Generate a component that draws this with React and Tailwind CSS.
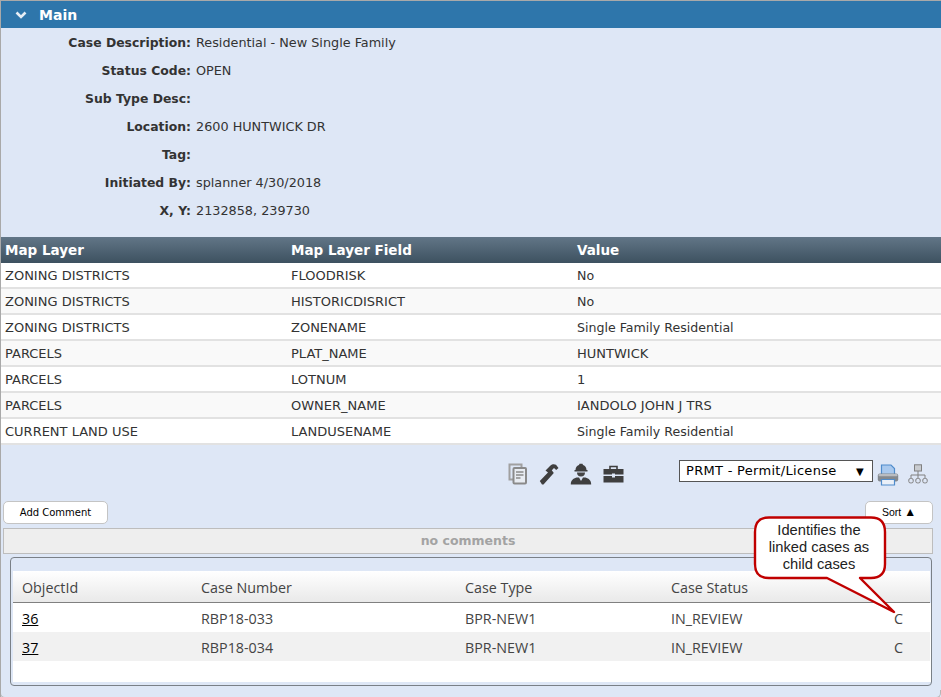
import React from "react";

const info = [
  ["Case Description:", "Residential - New Single Family"],
  ["Status Code:", "OPEN"],
  ["Sub Type Desc:", ""],
  ["Location:", "2600 HUNTWICK DR"],
  ["Tag:", ""],
  ["Initiated By:", "splanner 4/30/2018"],
  ["X, Y:", "2132858, 239730"],
];

const layers = [
  ["ZONING DISTRICTS", "FLOODRISK", "No"],
  ["ZONING DISTRICTS", "HISTORICDISRICT", "No"],
  ["ZONING DISTRICTS", "ZONENAME", "Single Family Residential"],
  ["PARCELS", "PLAT_NAME", "HUNTWICK"],
  ["PARCELS", "LOTNUM", "1"],
  ["PARCELS", "OWNER_NAME", "IANDOLO JOHN J TRS"],
  ["CURRENT LAND USE", "LANDUSENAME", "Single Family Residential"],
];

const cases = [
  ["36", "RBP18-033", "BPR-NEW1", "IN_REVIEW", "C"],
  ["37", "RBP18-034", "BPR-NEW1", "IN_REVIEW", "C"],
];

function CopyIcon() {
  return (
    <svg width="20" height="22" viewBox="0 0 20 22" className="block">
      <rect x="1.5" y="1.5" width="12" height="15" fill="none" stroke="#a0a0a0" strokeWidth="2" />
      <rect x="5.5" y="5" width="12.5" height="15.5" rx="1" fill="#e8ecf2" stroke="#8a8a8a" strokeWidth="2" />
      <path d="M8 9h7.5M8 12h7.5M8 15h4.5" stroke="#8a8a8a" strokeWidth="1.5" />
    </svg>
  );
}

function WrenchIcon() {
  return (
    <svg width="20" height="22" viewBox="0 0 20 22" className="block">
      <path
        d="M0.8 18 L9 9.5 L6.5 7.5 L11.5 2.5 C13 1 15.5 0.8 17 1.8 L19.5 5 L17.2 7 L15 5 L12.8 7.2 L14.8 10 L4.5 21.5 L3 21.5 Z"
        fill="#3f3f3f"
      />
    </svg>
  );
}

function WorkerIcon() {
  return (
    <svg width="22" height="22" viewBox="0 0 22 22" className="block">
      <path d="M5.5 7 C5.5 4 7.5 2.5 9 2 L9.5 0.8 H12.5 L13 2 C14.5 2.5 16.5 4 16.5 7 L17.5 7 L17.5 8.5 L4.5 8.5 L4.5 7 Z" fill="#3f3f3f" />
      <path d="M7 9.5 H15 C15 12 13.5 13.5 11 13.5 C8.5 13.5 7 12 7 9.5 Z" fill="#454545" />
      <path d="M0.8 21.5 C0.8 17.5 3 15.5 6.5 14.5 L9 14.5 L11 18 L13 14.5 L15.5 14.5 C19 15.5 21.2 17.5 21.2 21.5 Z" fill="#3f3f3f" />
    </svg>
  );
}

function CaseIcon() {
  return (
    <svg width="21" height="18" viewBox="0 0 21 18" className="block">
      <path d="M7 4 V1.5 H14 V4" fill="none" stroke="#3f3f3f" strokeWidth="1.6" />
      <path d="M0.5 4 H20.5 V9.5 H12 V8.5 H9 V9.5 H0.5 Z" fill="#3f3f3f" />
      <path d="M0.5 11 H9 V12.5 H12 V11 H20.5 V17.5 H0.5 Z" fill="#3f3f3f" />
    </svg>
  );
}

function PrintIcon() {
  return (
    <svg width="22" height="22" viewBox="0 0 22 22" className="block">
      <path d="M4.5 11 V1 H14 L17.5 4.5 V11 Z" fill="#a9c9ee" stroke="#4f8ccc" strokeWidth="1.2" />
      <rect x="0.8" y="9.5" width="20.4" height="8" rx="2" fill="#84898e" />
      <rect x="1.5" y="10" width="19" height="2.2" rx="1" fill="#b9bcc0" />
      <path d="M4.5 15.5 H17.5 V21 H4.5 Z" fill="#eaf0f8" stroke="#4f8ccc" strokeWidth="1.2" />
    </svg>
  );
}

function TreeIcon() {
  return (
    <svg width="20" height="20" viewBox="0 0 20 20" className="block">
      <rect x="6.5" y="0.8" width="7" height="6.2" fill="#c9ccd0" stroke="#808080" />
      <path d="M10 7 V11 M3 14 V11 H17 V14 M10 11 V14" fill="none" stroke="#808080" />
      <rect x="0.8" y="14.5" width="4.4" height="4.4" rx="1.5" fill="none" stroke="#808080" />
      <rect x="7.8" y="14.5" width="4.4" height="4.4" rx="1.5" fill="none" stroke="#808080" />
      <rect x="14.8" y="14.5" width="4.4" height="4.4" rx="1.5" fill="none" stroke="#808080" />
    </svg>
  );
}

function LayerCell({ text }) {
  const caps = text === text.toUpperCase();
  return <div className={caps ? "text-[13px] leading-[16px]" : "text-[12.6px] leading-[16px]"}>{text}</div>;
}

export default function App() {
  return (
    <div className="relative w-[941px] h-[697px] overflow-hidden bg-[#dee7f6] border-t border-l border-[#a9a9a9] text-[#333333] font-['DejaVu_Sans',sans-serif] text-[12px]">
      {/* Main header */}
      <div className="flex items-center h-[27px] pt-[2px] bg-[#2e76ab] text-white">
        <svg width="12" height="9" viewBox="0 0 12 9" className="ml-[14px] mr-[12px]">
          <path d="M1.5 1.5 L6 6 L10.5 1.5" fill="none" stroke="#e6eef5" strokeWidth="2.6" />
        </svg>
        <span className="font-bold text-[14px]">Main</span>
      </div>

      {/* Info rows */}
      <div className="flex flex-col pt-[1px] h-[209px]">
        {info.map(([k, v]) => (
          <div key={k} className="flex items-center h-[28px] shrink-0">
            <div className="w-[190px] text-right font-bold text-[12.4px] text-[#333333]">{k}</div>
            <div className="ml-[5px] text-[12.8px]">{v}</div>
          </div>
        ))}
      </div>

      {/* Map layer table */}
      <div className="w-[940px]">
        <div className="grid grid-cols-[286px_286px_1fr] items-center h-[26px] bg-gradient-to-b from-[#627687] to-[#3d5160] text-white font-bold text-[13.5px] pl-[4px]">
          <div>Map Layer</div>
          <div>Map Layer Field</div>
          <div>Value</div>
        </div>
        {layers.map((r, i) => (
          <div
            key={i}
            className={`grid grid-cols-[286px_286px_1fr] items-baseline h-[26px] pl-[4px] pt-[5px] border-b-2 border-[#e2e2e2] text-[#333333] ${i % 2 ? "bg-[#f9f9f9]" : "bg-white"}`}
          >
            <LayerCell text={r[0]} />
            <LayerCell text={r[1]} />
            <LayerCell text={r[2]} />
          </div>
        ))}
      </div>

      {/* Toolbar */}
      <div className="relative h-[56px]">
        <div className="flex items-center gap-[11px] pl-[507px] pt-[18px]">
          <CopyIcon />
          <WrenchIcon />
          <WorkerIcon />
          <CaseIcon />
        </div>
        <div className="absolute left-[678px] top-[15px] flex items-center">
          <div className="flex items-center justify-between w-[194px] h-[22px] bg-white border border-[#555555] text-black text-[13px] pl-[6px] pr-[8px] tracking-[0.3px]">
            <span>PRMT - Permit/License</span>
            <span className="text-[10px]">▼</span>
          </div>
        </div>
        <div className="absolute left-[876px] top-[19px]"><PrintIcon /></div>
        <div className="absolute left-[907px] top-[19px]"><TreeIcon /></div>
      </div>

      {/* Buttons */}
      <div className="flex justify-between pl-[2px] pr-[8px]">
        <button className="w-[105px] h-[23px] bg-white border border-[#c4c4c4] rounded-[5px] text-black text-[10px] font-['DejaVu_Sans',sans-serif]">
          Add Comment
        </button>
        <button className="w-[68px] h-[23px] pb-[2px] bg-white border border-[#c4c4c4] rounded-[5px] text-black text-[10.5px] leading-[14px] font-['Liberation_Sans',sans-serif]">
          Sort <span className="text-[12px]">▲</span>
        </button>
      </div>

      {/* No comments */}
      <div className="mx-[2px] mt-[4px] w-[930px] h-[26px] bg-[#eeeeee] border border-[#bdbdbd] flex items-center justify-center text-[#a3a3a3] font-bold text-[12.5px]">
        no comments
      </div>

      {/* Linked cases */}
      <div className="flex flex-col ml-[9px] mt-[3px] w-[922px] h-[129px] border border-[#7a8087] rounded-[4px] bg-[#dee7f6] pl-[2px] pb-[3px] overflow-hidden font-['Open_Sans',sans-serif] text-[14.3px] text-[#444444]">
        <div className="h-[13px] shrink-0" />
        <div className="grid grid-cols-[179px_264px_206px_1fr_36px] items-center h-[32px] shrink-0 pl-[9px] pt-[2px] mr-[1px] bg-gradient-to-b from-white to-[#e9e9e9] border-b border-[#808080]">
          <div>ObjectId</div>
          <div>Case Number</div>
          <div>Case Type</div>
          <div>Case Status</div>
          <div />
        </div>
        <div className="flex flex-col flex-1 bg-white">
          {cases.map((r, i) => (
            <div
              key={r[0]}
              className={`grid grid-cols-[179px_264px_206px_1fr_36px] items-center h-[29px] shrink-0 pl-[9px] pt-[2px] mr-[1px] ${i % 2 ? "bg-[#f1f1f1]" : "bg-white"}`}
            >
              <a className="underline text-black">{r[0]}</a>
              <div>{r[1]}</div>
              <div>{r[2]}</div>
              <div>{r[3]}</div>
              <div>{r[4]}</div>
            </div>
          ))}
        </div>
      </div>

      {/* Bottom page edge */}
      <div className="absolute left-[-1px] top-[689px] w-[941px] h-[8px] border-b border-l border-r border-[#b5b5b5] rounded-b-[5px]" />

      {/* Callout */}
      <div className="absolute left-[752px] top-[515px] w-[150px] h-[100px]">
        <svg width="150" height="100" viewBox="0 0 150 100" className="absolute left-0 top-0">
          <path
            d="M16 1.5 H118 Q132 1.5 132 16 V48 Q132 62 118 62 H107 L141 96 L74 62 H16 Q2 62 2 48 V16 Q2 1.5 16 1.5 Z"
            fill="white"
            stroke="#c00000"
            strokeWidth="2.4"
            strokeLinejoin="round"
          />
        </svg>
        <div className="absolute left-[1px] top-[6px] w-[130px] text-center font-['Liberation_Sans',sans-serif] text-[14.7px] leading-[17px] text-[#222222]">
          Identifies the<br />linked cases as<br />child cases
        </div>
      </div>
    </div>
  );
}
